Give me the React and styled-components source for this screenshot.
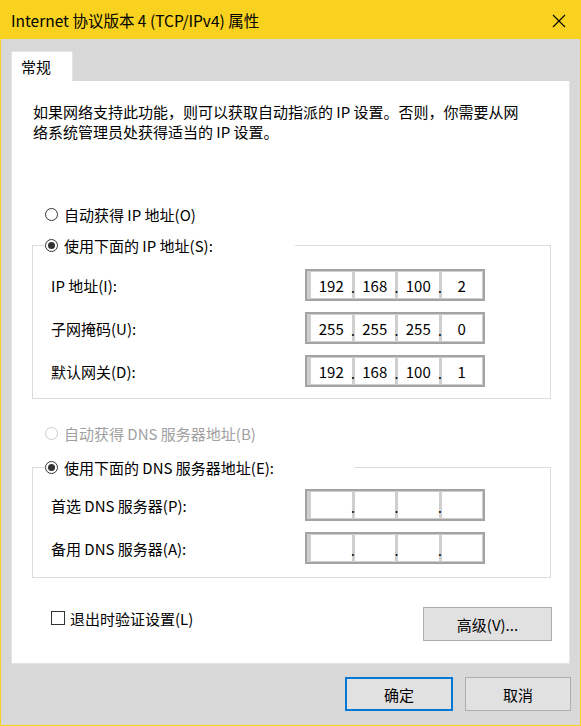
import React from "react";
import styled, { createGlobalStyle } from "styled-components";

const GlobalStyle = createGlobalStyle`
* {
  box-sizing: border-box;
}

html, body {
  margin: 0;
  padding: 0;
  background: #d8d8d8;
}

body {
  font-family: "Noto Sans CJK SC", "Noto Sans", "Liberation Sans", sans-serif;
  font-size: 15px;
  color: #000;
}

#root {
  width: 581px;
  height: 726px;
}
`;

const Window = styled.div`
width: 581px;
height: 726px;
display: flex;
flex-direction: column;
border: 1px solid #f8d21f;
border-top: none;
background: #d8d8d8;
`;

const TitleBar = styled.div`
height: 39px;
flex: none;
margin: 0 -1px;
display: flex;
align-items: center;
justify-content: space-between;
padding: 0 15px 0 11px;
background: #f8d21f;
font-size: 15.5px;
`;

const CloseButton = styled.div`
width: 14px;
height: 14px;
display: flex;
margin-top: 2px;
`;

const Body = styled.div`
flex: 1;
display: flex;
flex-direction: column;
padding: 12px 10px 0 10px;
`;

const TabStrip = styled.div`
display: flex;
height: 30px;
`;

const Tab = styled.div`
width: 62px;
height: 30px;
line-height: 29px;
padding-left: 9px;
background: #fff;
border: 1px solid #e4e4e4;
border-bottom: none;
`;

const Panel = styled.div`
height: 583px;
display: flex;
flex-direction: column;
padding: 21px 18px 0 20px;
background: #fff;
border: 1px solid #e4e4e4;
border-top: none;
`;

const Description = styled.p`
margin: 0 0 0 1px;
line-height: 20px;
white-space: nowrap;
`;

const RadioRow = styled.label`
display: flex;
align-items: center;
height: 20px;
gap: 6px;
margin-left: ${(p) => p.$indent || 0}px;
margin-top: ${(p) => p.$top || 0}px;
color: ${(p) => (p.$disabled ? "#a0a0a0" : "#000")};
white-space: nowrap;
`;

const RadioCircle = styled.span`
width: 13px;
height: 13px;
flex: none;
border-radius: 50%;
border: 1px solid ${(p) => (p.$disabled ? "#cccccc" : "#333")};
background: #fff;
display: flex;
align-items: center;
justify-content: center;
&::after {
  content: "";
  display: ${(p) => (p.$checked ? "block" : "none")};
  width: 7px;
  height: 7px;
  border-radius: 50%;
  background: #333;
}
`;

const GroupBox = styled.fieldset`
margin: ${(p) => p.$top}px 0 0 0;
padding: ${(p) => p.$padTop}px 0 ${(p) => p.$padBottom}px 0;
border: 1px solid #dcdcdc;
min-width: 0;
display: flex;
flex-direction: column;
gap: 11px;
`;

const Legend = styled.legend`
padding: 0;
margin-left: 12px;
width: ${(p) => p.$width}px;
background: #fff;
`;

const FieldRow = styled.div`
display: grid;
grid-template-columns: 254px 180px;
align-items: center;
height: 32px;
padding-left: 18px;
white-space: nowrap;
`;

const IpBox = styled.div`
height: 32px;
display: flex;
align-items: stretch;
border: 2px solid #a3a3a3;
padding: 1px 1px 1px 4px;
background: #cfcfcf;
`;

const Octet = styled.div`
flex: 1;
display: flex;
align-items: center;
justify-content: center;
background: #fff;
font-size: 15px;
`;

const Dot = styled.span`
width: 3px;
flex: none;
display: flex;
align-items: center;
justify-content: center;
font-size: 14px;
line-height: 1;
padding-top: 3px;
color: #000;
`;

const BottomRow = styled.div`
display: flex;
justify-content: space-between;
align-items: flex-start;
margin-top: 29px;
padding-left: 19px;
`;

const CheckRow = styled.label`
display: flex;
align-items: center;
gap: 5px;
height: 20px;
margin-top: 1px;
white-space: nowrap;
`;

const CheckSquare = styled.span`
width: 14px;
height: 14px;
flex: none;
border: 1px solid #333;
background: #fff;
`;

const Button = styled.button`
width: ${(p) => p.$width}px;
height: 34px;
font-family: inherit;
font-size: 15px;
color: #000;
background: #e1e1e1;
border: ${(p) => (p.$primary ? "2px solid #0078d7" : "1px solid #adadad")};
padding: 0;
cursor: default;
margin-right: ${(p) => p.$right || 0}px;
`;

const Footer = styled.div`
display: flex;
justify-content: flex-end;
gap: 12px;
padding: 13px 0 0 0;
margin-right: -1px;
`;

function IpField({ values }) {
  return (
    <IpBox>
      {values.map((v, i) => (
        <React.Fragment key={i}>
          <Octet>{v}</Octet>
          {i < 3 && <Dot>.</Dot>}
        </React.Fragment>
      ))}
    </IpBox>
  );
}

function Radio({ checked, disabled, children, ...rest }) {
  return (
    <RadioRow $disabled={disabled} {...rest}>
      <RadioCircle $checked={checked} $disabled={disabled} />
      <span>{children}</span>
    </RadioRow>
  );
}

const empty = ["", "", "", ""];

export default function App() {
  return (
    <>
      <GlobalStyle />
      <Window>
        <TitleBar>
          <span>Internet 协议版本 4 (TCP/IPv4) 属性</span>
          <CloseButton>
            <svg width="14" height="14" viewBox="0 0 14 14">
              <path d="M1 1 L13 13 M13 1 L1 13" stroke="#000" strokeWidth="1.1" fill="none" />
            </svg>
          </CloseButton>
        </TitleBar>
        <Body>
          <TabStrip>
            <Tab>常规</Tab>
          </TabStrip>
          <Panel>
            <Description>
              如果网络支持此功能，则可以获取自动指派的 IP 设置。否则，你需要从网
              <br />
              络系统管理员处获得适当的 IP 设置。
            </Description>

            <Radio $indent={13} $top={62}>自动获得 IP 地址(O)</Radio>

            <GroupBox $top={11} $padTop={14} $padBottom={11}>
              <Legend $width={250}>
                <Radio checked>使用下面的 IP 地址(S):</Radio>
              </Legend>
              <FieldRow>
                <span>IP 地址(I):</span>
                <IpField values={["192", "168", "100", "2"]} />
              </FieldRow>
              <FieldRow>
                <span>子网掩码(U):</span>
                <IpField values={["255", "255", "255", "0"]} />
              </FieldRow>
              <FieldRow>
                <span>默认网关(D):</span>
                <IpField values={["192", "168", "100", "1"]} />
              </FieldRow>
            </GroupBox>

            <Radio disabled $indent={13} $top={24}>自动获得 DNS 服务器地址(B)</Radio>

            <GroupBox $top={14} $padTop={12} $padBottom={13}>
              <Legend $width={309}>
                <Radio checked>使用下面的 DNS 服务器地址(E):</Radio>
              </Legend>
              <FieldRow>
                <span>首选 DNS 服务器(P):</span>
                <IpField values={empty} />
              </FieldRow>
              <FieldRow>
                <span>备用 DNS 服务器(A):</span>
                <IpField values={empty} />
              </FieldRow>
            </GroupBox>

            <BottomRow>
              <CheckRow>
                <CheckSquare />
                <span>退出时验证设置(L)</span>
              </CheckRow>
              <Button $width={129} $right={-1}>高级(V)...</Button>
            </BottomRow>
          </Panel>
          <Footer>
            <Button $primary $width={108}>确定</Button>
            <Button $width={106}>取消</Button>
          </Footer>
        </Body>
      </Window>
    </>
  );
}
